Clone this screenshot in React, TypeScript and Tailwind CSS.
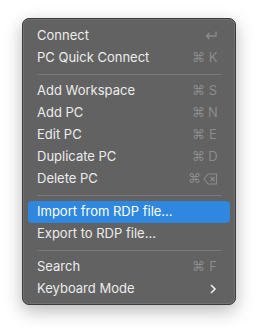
import React from 'react';

type Item = { label: string; key?: string; special?: 'return' | 'delete' | 'chevron'; active?: boolean } | 'sep';

const items: Item[] = [
  { label: 'Connect', special: 'return' },
  { label: 'PC Quick Connect', key: 'K' },
  'sep',
  { label: 'Add Workspace', key: 'S' },
  { label: 'Add PC', key: 'N' },
  { label: 'Edit PC', key: 'E' },
  { label: 'Duplicate PC', key: 'D' },
  { label: 'Delete PC', special: 'delete' },
  'sep',
  { label: 'Import from RDP file...', active: true },
  { label: 'Export to RDP file...' },
  'sep',
  { label: 'Search', key: 'F' },
  { label: 'Keyboard Mode', special: 'chevron' },
];

const Shortcut = ({ item }: { item: Exclude<Item, 'sep'> }) => {
  if (item.special === 'return') {
    return (
      <svg width="14" height="12" viewBox="0 0 14 12" className="text-[#8c8c8c]">
        <path d="M12 1.5v4.5H2.5M5.5 3L2.5 6l3 3" fill="none" stroke="currentColor" strokeWidth="1.3" />
      </svg>
    );
  }
  if (item.special === 'chevron') {
    return (
      <svg width="8" height="12" viewBox="0 0 8 12" className="text-[#ececec] mr-[1px]">
        <path d="M2 2l4 4-4 4" fill="none" stroke="currentColor" strokeWidth="1.6" />
      </svg>
    );
  }
  if (item.special === 'delete') {
    return (
      <div className="flex items-center gap-[2px] text-[#8c8c8c]">
        <span className="text-[13px]">⌘</span>
        <svg width="15" height="12" viewBox="0 0 15 12">
          <path d="M5 1h8.5v10H5L1 6z" fill="none" stroke="currentColor" strokeWidth="1.1" strokeLinejoin="round" />
          <path d="M7.5 4l4 4M11.5 4l-4 4" stroke="currentColor" strokeWidth="1.1" />
        </svg>
      </div>
    );
  }
  if (!item.key) return null;
  return (
    <div className="flex items-center gap-[3px] text-[#8c8c8c]">
      <span className="text-[13px]">⌘</span>
      <span className="w-[10px] text-center">{item.key}</span>
    </div>
  );
};

export default function App() {
  return (
    <div className="w-[258px] h-[331px] bg-white pt-[18px] pl-[22px]" style={{ fontFamily: 'Inter, "Noto Sans", sans-serif' }}>
      <div className="w-[214px] rounded-[7px] border border-[#3c3c3c] bg-[#626262] px-[5px] pt-[6px] pb-[4px] shadow-[0_6px_18px_rgba(0,0,0,0.28),inset_0_0_0_1px_rgba(255,255,255,0.1)]">
        {items.map((item, i) =>
          item === 'sep' ? (
            <div key={i} className="h-[11px] flex items-center px-[9px]">
              <div className="h-px w-full bg-[#7a7a7a]" />
            </div>
          ) : (
            <div
              key={i}
              className={`h-[22px] flex items-center justify-between pl-[9px] pr-[12px] rounded-[4px] text-[13px] ${item.active ? 'bg-[#2f87df] text-white' : 'text-[#ececec]'}`}
            >
              <span>{item.label}</span>
              <Shortcut item={item} />
            </div>
          )
        )}
      </div>
    </div>
  );
}
